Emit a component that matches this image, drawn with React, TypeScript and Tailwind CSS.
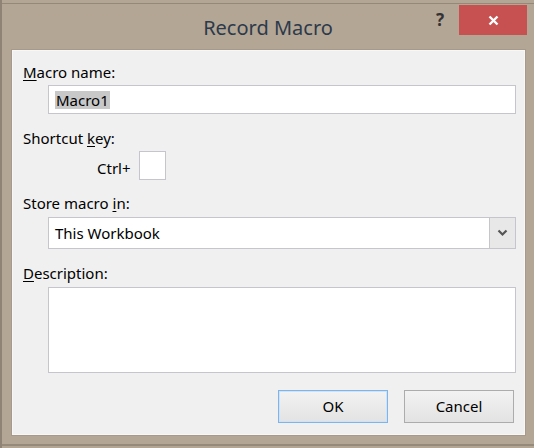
import React from "react";

const font = { fontFamily: '"Noto Sans", "Open Sans", sans-serif' };

function Label({ pre, u, post }: { pre: string; u: string; post: string }) {
  return (
    <div className="ml-[10px] h-[20px] text-[15px] leading-[20px] text-black">
      {pre}
      <span className="underline underline-offset-2">{u}</span>
      {post}
    </div>
  );
}

export default function App() {
  return (
    <div
      className="relative h-[448px] w-[534px] overflow-hidden border-l-2 border-[#8f8375] bg-[#b4a695]"
      style={font}
    >
      <div className="absolute left-0 right-0 top-[3px] h-px bg-[#948878]" />
      {/* title bar */}
      <div className="relative h-[50px]">
        <div className="pt-[14px] text-center text-[20px] leading-[28px] text-[#2c3a4b]">
          Record Macro
        </div>
        <div className="absolute left-[434px] top-[8px] text-[17px] font-bold leading-[24px] text-[#333]">
          ?
        </div>
        <div className="absolute left-[457px] top-[5px] flex h-[30px] w-[68px] items-center justify-center bg-[#c75050]">
          <svg width="11" height="11" viewBox="0 0 11 11">
            <path d="M1.5 1.5 L9.5 9.5 M9.5 1.5 L1.5 9.5" stroke="#fff" strokeWidth="2.4" />
          </svg>
        </div>
      </div>

      {/* content */}
      <div className="ml-[10px] h-[385px] w-[513px] border border-[#f7f7f7] bg-[#f0f0f0] pt-[11px] outline outline-1 outline-[#a89a8a]">
        <Label pre="" u="M" post="acro name:" />
        <div className="ml-[35px] mt-[3px] flex h-[29px] w-[468px] items-center border border-[#c5c5cb] bg-white pl-[6px]">
          <span className="bg-[#c8c8c8] px-px text-[15px] leading-[18px] text-black">Macro1</span>
        </div>

        <div className="mt-[14px]">
          <Label pre="Shortcut " u="k" post="ey:" />
        </div>
        <div className="mt-[3px] flex h-[29px] items-center">
          <span className="ml-[84px] pt-[4px] text-[15px] leading-[20px] text-black">Ctrl+</span>
          <div className="ml-[8px] h-[29px] w-[27px] border border-[#c5c5cb] bg-white" />
        </div>

        <div className="mt-[13px]">
          <Label pre="Store macro " u="i" post="n:" />
        </div>
        <div className="ml-[35px] mt-[4px] flex h-[32px] w-[468px] border border-[#c5c5cb] bg-white">
          <div className="flex-1 pl-[6px] text-[15px] leading-[30px] text-black">This Workbook</div>
          <div className="flex w-[26px] items-center justify-center border-l border-[#c5c5cb] bg-[#e8e8e8]">
            <svg width="11" height="8" viewBox="0 0 11 8">
              <path d="M1.5 1.5 L5.5 5.5 L9.5 1.5" fill="none" stroke="#555" strokeWidth="2.2" />
            </svg>
          </div>
        </div>

        <div className="mt-[14px]">
          <Label pre="" u="D" post="escription:" />
        </div>
        <div className="ml-[35px] mt-[4px] h-[86px] w-[468px] border border-[#c5c5cb] bg-white" />

        <div className="mr-[10px] mt-[17px] flex justify-end gap-[16px]">
          <button className="h-[33px] w-[110px] border border-[#7eb4ea] bg-gradient-to-b from-[#f2f2f2] to-[#e3e3e3] text-[15px] text-black outline outline-1 outline-offset-[-2px] outline-[#cfe3f7]">
            OK
          </button>
          <button className="h-[33px] w-[110px] border border-[#acacac] bg-gradient-to-b from-[#f2f2f2] to-[#e3e3e3] text-[15px] text-black">
            Cancel
          </button>
        </div>
      </div>
      <div className="absolute bottom-[2px] left-0 right-0 h-[2px] bg-[#968a7a]" />
    </div>
  );
}
